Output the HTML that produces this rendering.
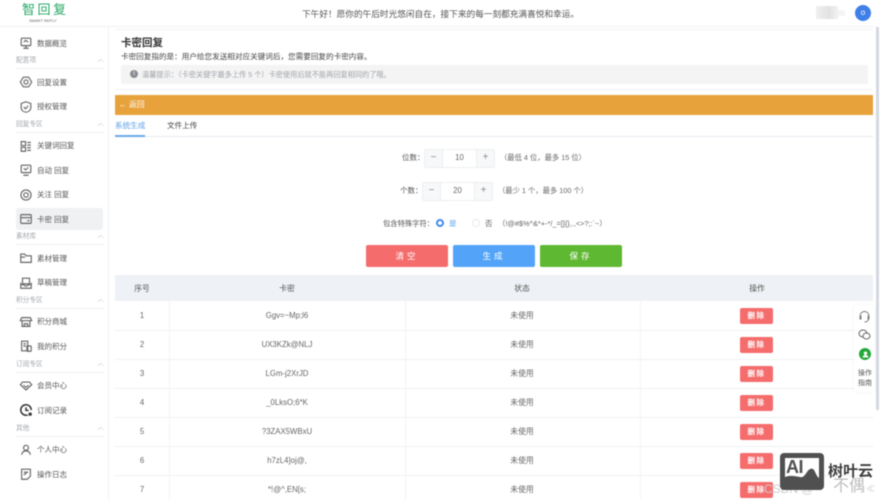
<!DOCTYPE html>
<html lang="zh-CN"><head><meta charset="utf-8"><style>
html,body{margin:0;padding:0;background:#fff}
body{width:882px;height:500px;overflow:hidden;position:relative;font-family:"Liberation Sans","Noto Sans CJK SC",sans-serif;color:#606266}
#w{position:absolute;left:0;top:0;width:882px;height:500px;overflow:hidden;filter:blur(.5px);background:#fff}
.a{position:absolute;white-space:nowrap}
.r{position:absolute;background:#fff}
.nav{font-size:7.5px;line-height:12px;color:#555;left:37px}
.sec{font-size:6.7px;line-height:10px;color:#a4a8ad;left:16px}
.ln{position:absolute;left:16px;width:88px;height:1px;background:#f0f1f3}
.ch{position:absolute;left:97px;width:7px;height:5px}
.ic{position:absolute;left:19px;width:14px;height:14px;margin-top:1px;fill:none;stroke:#666;stroke-width:1.3}
.c{transform:translateX(-50%);margin-top:1px;font-size:7.8px;line-height:12px;color:#666}
.del{position:absolute;left:740px;width:33px;height:16px;background:#f56c6c;border-radius:2px;color:#fff;font-size:7.5px;line-height:16px;text-align:center;letter-spacing:1.5px;font-weight:bold}
.h{position:absolute;left:115px;width:758px;height:1px;background:#f0f1f3}
.v{position:absolute;top:301px;width:1px;height:199px;background:#f3f4f6}
.btn{position:absolute;top:245px;width:82px;height:22px;border-radius:2px;color:#fff;font-size:8.5px;line-height:22px;text-align:center;letter-spacing:3px}
.num{position:absolute;width:69px;height:17px;border:1px solid #eceef2;border-radius:2px;background:#fff}
.num i{position:absolute;top:0;width:17px;height:17px;background:#f7f8fa;font-style:normal;font-size:10px;line-height:16px;text-align:center;color:#888}
.num b{position:absolute;left:17px;right:17px;top:0;font-weight:normal;font-size:7.8px;line-height:16px;text-align:center;color:#666}
</style></head><body><div id="w">

<!-- header -->
<div class="a" style="left:22px;top:3px;font-size:13px;line-height:14px;color:#27a866;letter-spacing:2.5px">智回复</div>
<div class="a" style="left:29px;top:18px;font-size:4px;line-height:5px;color:#666">SMART REPLY</div>
<div class="a" style="left:302px;top:8px;font-size:8.67px;line-height:13px;color:#555">下午好！愿你的午后时光悠闲自在，接下来的每一刻都充满喜悦和幸运。</div>
<div class="r" style="left:816px;top:6px;width:22px;height:13px;background:linear-gradient(90deg,#f0f0f0,#e2e2e2 60%,#f2f2f2)"></div>
<div class="r" style="left:838px;top:10px;width:7px;height:6px;background:#f5f5f5"></div>
<div class="r" style="left:855px;top:5px;width:16px;height:16px;border-radius:50%;background:#3f7fe8;color:#fff;font-size:8px;line-height:15px;text-align:center">o</div>
<div class="r" style="left:0;top:26px;width:874px;height:1px;background:#eff0f2"></div>
<div class="r" style="left:108px;top:27px;width:1px;height:473px;background:#f0f1f3"></div>

<!-- scrollbar -->
<div class="r" style="left:876px;top:27px;width:3px;height:383px;background:#d4d8e0"></div>

<!-- sidebar -->
<svg class="ic" style="top:35px" viewBox="0 0 16 16"><rect x="2.5" y="2.5" width="11" height="8.5" rx="1"/><path d="M5 14h6M8 11v3M5.5 7l2-2 3 2"/></svg>
<div class="a nav" style="top:38px">数据概览</div>
<div class="a sec" style="top:56px">配置项</div><svg class="ch" style="top:58px" viewBox="0 0 8 5"><path d="M1 4l3-3 3 3" fill="none" stroke="#ddd"/></svg><div class="ln" style="top:68px"></div>
<svg class="ic" style="top:74px" viewBox="0 0 16 16"><path d="M5 2.500h6L14.500 8 11 13.500H5L1.500 8z"/><circle cx="8" cy="8" r="2.300"/></svg>
<div class="a nav" style="top:77px">回复设置</div>
<svg class="ic" style="top:99px" viewBox="0 0 16 16"><path d="M8 2l5.500 2v4.500c0 3-2.500 5-5.500 5.500-3-.5-5.500-2.500-5.500-5.500V4z"/><path d="M5.500 8l2 2 3-3.500"/></svg>
<div class="a nav" style="top:101px">授权管理</div>
<div class="a sec" style="top:120px">回复专区</div><svg class="ch" style="top:122px" viewBox="0 0 8 5"><path d="M1 4l3-3 3 3" fill="none" stroke="#ddd"/></svg><div class="ln" style="top:132px"></div>
<svg class="ic" style="top:138px" viewBox="0 0 16 16"><path d="M2.500 3h5v4.500h-5zM2.500 9.500h5V14h-5zM9.500 4h4M9.500 7h4M9.500 10h4M9.500 13h4"/></svg>
<div class="a nav" style="top:140px">关键词回复</div>
<svg class="ic" style="top:162px" viewBox="0 0 16 16"><rect x="2.500" y="2.500" width="11" height="8.500" rx="1"/><path d="M5 14h6M5.500 6l2 2 3-3"/></svg>
<div class="a nav" style="top:165px">自动 回复</div>
<svg class="ic" style="top:187px" viewBox="0 0 16 16"><circle cx="8" cy="8" r="5.800"/><circle cx="8" cy="8" r="2.500"/></svg>
<div class="a nav" style="top:189px">关注 回复</div>
<div class="r" style="left:16px;top:208px;width:87px;height:22px;background:#f0f1f3;border-radius:3px"></div>
<svg class="ic" style="top:211px" viewBox="0 0 16 16"><rect x="2" y="3" width="12" height="10" rx="1"/><path d="M2 6.500h12M9.500 10h2.500"/></svg>
<div class="a nav" style="top:214px">卡密 回复</div>
<div class="a sec" style="top:232px">素材库</div><svg class="ch" style="top:234px" viewBox="0 0 8 5"><path d="M1 4l3-3 3 3" fill="none" stroke="#ddd"/></svg><div class="ln" style="top:244px"></div>
<svg class="ic" style="top:250px" viewBox="0 0 16 16"><path d="M2 13V3.500h4.500l1.500 2h6V13z"/><path d="M2 7h5"/></svg>
<div class="a nav" style="top:253px">素材管理</div>
<svg class="ic" style="top:275px" viewBox="0 0 16 16"><path d="M4 2.500h8V9H4zM2 7.500V14h12V7.500M2 10h4l1 1.500h2l1-1.500h4"/></svg>
<div class="a nav" style="top:277px">草稿管理</div>
<div class="a sec" style="top:296px">积分专区</div><svg class="ch" style="top:298px" viewBox="0 0 8 5"><path d="M1 4l3-3 3 3" fill="none" stroke="#ddd"/></svg><div class="ln" style="top:308px"></div>
<svg class="ic" style="top:314px" viewBox="0 0 16 16"><path d="M3 3h10l1.500 3.500h-13zM3.500 6.500V13h9V6.500M6 13v-3h4v3"/></svg>
<div class="a nav" style="top:316px">积分商城</div>
<svg class="ic" style="top:338px" viewBox="0 0 16 16"><path d="M3 2.500h7v11H3zM5 5.500h3M5 8h3"/><rect x="9" y="8" width="5" height="6" rx="1"/></svg>
<div class="a nav" style="top:341px">我的积分</div>
<div class="a sec" style="top:360px">订阅专区</div><svg class="ch" style="top:362px" viewBox="0 0 8 5"><path d="M1 4l3-3 3 3" fill="none" stroke="#ddd"/></svg><div class="ln" style="top:372px"></div>
<svg class="ic" style="top:378px" viewBox="0 0 16 16"><path d="M4 3.500h8l2.500 3L8 12.500 1.500 6.500z"/><path d="M5 7l3 2.500L11 7"/></svg>
<div class="a nav" style="top:380px">会员中心</div>
<svg class="ic" style="top:402px;stroke:#333;stroke-width:1.700" viewBox="0 0 16 16"><path d="M14 8a6 6 0 1 0-4 5.600M8 5v3.500h3"/><rect x="11" y="11" width="3.500" height="3.500" fill="#333" stroke="none"/></svg>
<div class="a nav" style="top:405px">订阅记录</div>
<div class="a sec" style="top:424px">其他</div><svg class="ch" style="top:426px" viewBox="0 0 8 5"><path d="M1 4l3-3 3 3" fill="none" stroke="#ddd"/></svg><div class="ln" style="top:436px"></div>
<svg class="ic" style="top:442px" viewBox="0 0 16 16"><circle cx="8" cy="5.500" r="2.800"/><path d="M3 13.500c.5-3 2.500-4.500 5-4.500s4.500 1.500 5 4.500"/></svg>
<div class="a nav" style="top:444px">个人中心</div>
<svg class="ic" style="top:466px" viewBox="0 0 16 16"><path d="M3 2.500h10v8l-3.500 3.500H3z"/><path d="M5.500 6h5M5.500 9l3-2"/></svg>
<div class="a nav" style="top:469px">操作日志</div>

<!-- intro card -->
<div class="r" style="left:115px;top:29px;width:758px;height:1px;background:#f2f3f5"></div>
<div class="r" style="left:115px;top:89px;width:758px;height:1px;background:#f2f3f5"></div>
<div class="a" style="left:121px;top:35px;font-size:10.500px;line-height:16px;color:#333;font-weight:bold">卡密回复</div>
<div class="a" style="left:121px;top:51px;font-size:7.600px;line-height:12px;color:#444">卡密回复指的是：用户给您发送相对应关键词后，您需要回复的卡密内容。</div>
<div class="r" style="left:121px;top:65px;width:747px;height:19px;background:#f4f4f5;border-radius:2px"></div>
<div class="r" style="left:130px;top:70px;width:8px;height:8px;border-radius:50%;background:#8a8d93;color:#fff;font-size:6px;line-height:8px;text-align:center">i</div>
<div class="a" style="left:142px;top:69px;font-size:7.200px;line-height:11px;color:#a0a3a8">温馨提示：（卡密关键字最多上传 5 个）卡密使用后就不能再回复相同的了哦。</div>

<!-- back bar -->
<div class="r" style="left:115px;top:95px;width:758px;height:20px;background:#e7a23c"></div>
<div class="a" style="left:119px;top:99px;font-size:7.800px;line-height:12px;color:#fff">← 返回</div>

<!-- tabs -->
<div class="a" style="left:115px;top:120px;font-size:7.600px;line-height:12px;color:#5a9fe8">系统生成</div>
<div class="a" style="left:167px;top:120px;font-size:7.600px;line-height:12px;color:#444">文件上传</div>
<div class="r" style="left:115px;top:136px;width:758px;height:1px;background:#e9ebef"></div>
<div class="r" style="left:115px;top:135px;width:30px;height:2px;background:#6aa9ea"></div>

<!-- form -->
<div class="a" style="left:402px;top:152px;font-size:7.500px;line-height:12px;color:#555">位数：</div>
<div class="num" style="left:424px;top:149px"><i style="left:0;border-right:1px solid #eceef2">−</i><b>10</b><i style="right:0;border-left:1px solid #eceef2">+</i></div>
<div class="a" style="left:500px;top:152px;font-size:7.300px;line-height:12px;color:#666">（最低 4 位，最多 15 位）</div>

<div class="a" style="left:400px;top:185px;font-size:7.500px;line-height:12px;color:#555">个数：</div>
<div class="num" style="left:422px;top:182px"><i style="left:0;border-right:1px solid #eceef2">−</i><b>20</b><i style="right:0;border-left:1px solid #eceef2">+</i></div>
<div class="a" style="left:498px;top:185px;font-size:7.300px;line-height:12px;color:#666">（最少 1 个，最多 100 个）</div>

<div class="a" style="left:383px;top:218px;font-size:7.300px;line-height:12px;color:#555">包含特殊字符：</div>
<div class="r" style="left:436px;top:219px;width:8px;height:8px;border-radius:50%;background:#fff;border:2.500px solid #3d8bf0;box-sizing:border-box"></div>
<div class="a" style="left:449px;top:218px;font-size:7.500px;line-height:12px;color:#5a9fe8">是</div>
<div class="r" style="left:472px;top:219px;width:8px;height:8px;border-radius:50%;border:1px solid #e8e9ec;box-sizing:border-box"></div>
<div class="a" style="left:485px;top:218px;font-size:7.500px;line-height:12px;color:#666">否</div>
<div class="a" style="left:498px;top:218px;font-size:7.350px;line-height:12px;color:#666">（!@#$%^&amp;*+-*/_=[]{},.,&lt;&gt;?;:`~）</div>

<div class="btn" style="left:366px;background:#f56c6c">清空</div>
<div class="btn" style="left:453px;background:#53a4f8">生成</div>
<div class="btn" style="left:540px;background:#5fb832">保存</div>

<!-- table -->
<div class="r" style="left:115px;top:275px;width:758px;height:26px;background:#eef1f5"></div>
<div class="a c" style="left:142px;top:282px;color:#555">序号</div>
<div class="a c" style="left:287px;top:282px;color:#555">卡密</div>
<div class="a c" style="left:522px;top:282px;color:#555">状态</div>
<div class="a c" style="left:757px;top:282px;color:#555">操作</div>
<div class="v" style="left:169px"></div><div class="v" style="left:405px"></div><div class="v" style="left:640px"></div>
<div class="h" style="top:330px"></div><div class="h" style="top:359px"></div><div class="h" style="top:388px"></div><div class="h" style="top:417px"></div><div class="h" style="top:446px"></div><div class="h" style="top:475px"></div>

<div class="a c" style="left:142px;top:309px">1</div><div class="a c" style="left:287px;top:309px">Ggv=~Mp;l6</div><div class="a c" style="left:522px;top:309px">未使用</div><div class="del" style="top:308px">删除</div>
<div class="a c" style="left:142px;top:338px">2</div><div class="a c" style="left:287px;top:338px">UX3KZk@NLJ</div><div class="a c" style="left:522px;top:338px">未使用</div><div class="del" style="top:337px">删除</div>
<div class="a c" style="left:142px;top:367px">3</div><div class="a c" style="left:287px;top:367px">LGm-j2XrJD</div><div class="a c" style="left:522px;top:367px">未使用</div><div class="del" style="top:366px">删除</div>
<div class="a c" style="left:142px;top:396px">4</div><div class="a c" style="left:287px;top:396px">_0LksO;6*K</div><div class="a c" style="left:522px;top:396px">未使用</div><div class="del" style="top:395px">删除</div>
<div class="a c" style="left:142px;top:425px">5</div><div class="a c" style="left:287px;top:425px">?3ZAX5WBxU</div><div class="a c" style="left:522px;top:425px">未使用</div><div class="del" style="top:424px">删除</div>
<div class="a c" style="left:142px;top:454px">6</div><div class="a c" style="left:287px;top:454px">h7zL4]oj@,</div><div class="a c" style="left:522px;top:454px">未使用</div><div class="del" style="top:453px">删除</div>
<div class="a c" style="left:142px;top:483px">7</div><div class="a c" style="left:287px;top:483px">*!@^,EN[s;</div><div class="a c" style="left:522px;top:483px">未使用</div><div class="del" style="top:482px">删除</div>

<!-- float panel -->
<div class="r" style="left:854px;top:305px;width:20px;height:87px;background:#fff;border-radius:3px;box-shadow:0 0 3px rgba(0,0,0,.06)"></div>
<svg style="position:absolute;left:858px;top:310px;width:13px;height:13px;fill:none;stroke:#777;stroke-width:.9" viewBox="0 0 13 13"><path d="M2 7V6a4.500 4.500 0 0 1 9 0v1M2 6h1v3H2zM10 6h1v3h-1zM10.500 9c0 2-2 3-4 3"/></svg>
<svg style="position:absolute;left:858px;top:328px;width:13px;height:13px;fill:none;stroke:#666;stroke-width:1" viewBox="0 0 13 13"><ellipse cx="5" cy="5.500" rx="4" ry="3.500"/><ellipse cx="8.500" cy="8" rx="3.500" ry="3" fill="#fff"/></svg>
<div class="r" style="left:859px;top:348px;width:12px;height:12px;border-radius:50%;background:#22a83a"></div>
<svg style="position:absolute;left:861.500px;top:350.500px;width:7px;height:7px;fill:#fff" viewBox="0 0 7 7"><circle cx="3.500" cy="2.200" r="1.700"/><path d="M.5 6.500c.3-1.800 1.500-2.500 3-2.500s2.700.7 3 2.500z"/></svg>
<div class="a" style="left:858px;top:369px;width:14px;font-size:7px;line-height:9.500px;color:#555;white-space:normal;text-align:center">操作指南</div>

<!-- watermark -->
<div class="a" style="left:833px;top:478px;font-size:16px;line-height:18px;color:#bdbdbd">不偶</div>
<div class="a" style="left:866px;top:484px;font-size:9px;line-height:10px;color:#ccc">≪</div>
<div class="a" style="left:764px;top:482px;font-size:12px;line-height:14px;color:#ccc">CSDN @</div>
<div class="r" style="left:780px;top:453px;width:44px;height:37px;background:#505050;border-radius:4px"></div>
<svg style="position:absolute;left:785px;top:458px;width:34px;height:27px" viewBox="0 0 34 27"><rect width="34" height="27" fill="#fff"/><path d="M0 27V19c5-2 10-1 15 0 3 1 5-2 7-5 2-3 4-4 6-3 2 1 3 7 6 9v7z" fill="#505050"/></svg>
<div class="a" style="left:786px;top:458px;font-size:18px;line-height:19px;font-weight:bold;color:#505050;letter-spacing:-.5px">AI</div>
<div class="a" style="left:828px;top:463px;font-size:15px;line-height:18px;font-weight:bold;color:#3d3d3d">树叶云</div>

</div></body></html>
